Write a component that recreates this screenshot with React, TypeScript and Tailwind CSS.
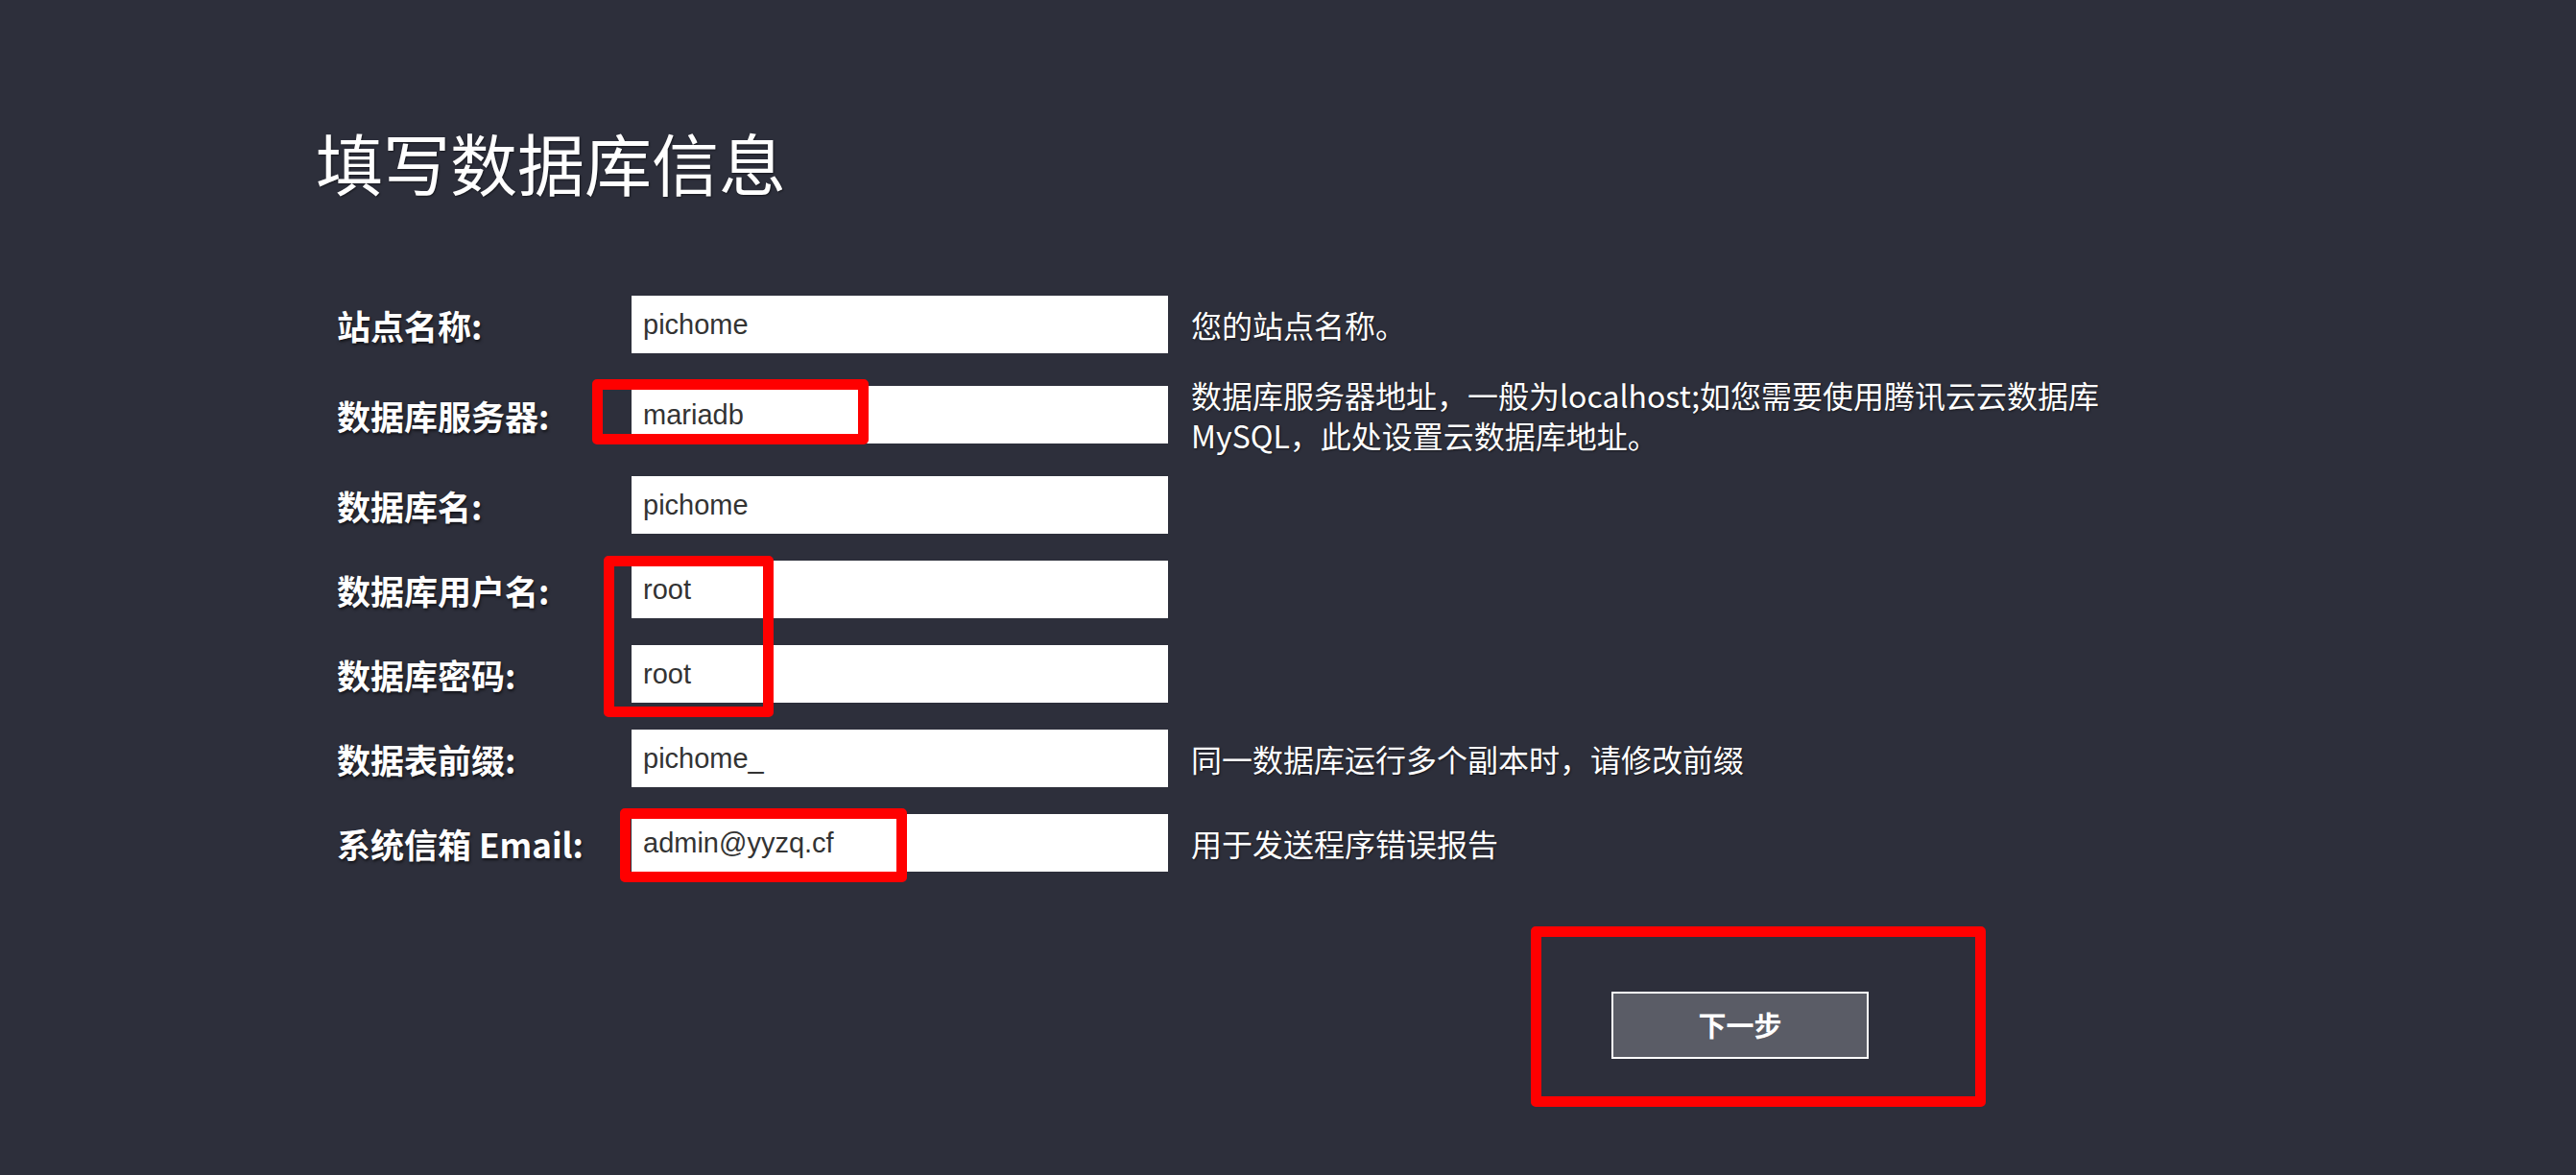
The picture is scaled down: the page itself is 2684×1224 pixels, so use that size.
import React from "react";

const cjk = "font-['Noto_Sans_CJK_SC',sans-serif]";

type Row = { label: string; value: string; help?: string[] };

const rows: Row[] = [
  { label: "站点名称:", value: "pichome", help: ["您的站点名称。"] },
  {
    label: "数据库服务器:",
    value: "mariadb",
    help: ["数据库服务器地址，一般为localhost;如您需要使用腾讯云云数据库", "MySQL，此处设置云数据库地址。"],
  },
  { label: "数据库名:", value: "pichome" },
  { label: "数据库用户名:", value: "root" },
  { label: "数据库密码:", value: "root" },
  { label: "数据表前缀:", value: "pichome_", help: ["同一数据库运行多个副本时，请修改前缀"] },
  { label: "系统信箱 Email:", value: "admin@yyzq.cf", help: ["用于发送程序错误报告"] },
];

export default function App() {
  return (
    <div className={`relative min-h-screen w-full bg-[#2d2f3b] ${cjk}`}>
      <div className="pl-[329px] pt-[134px]">
        <h1 className="text-[70px] leading-none font-normal text-white [text-shadow:1px_1px_2px_rgba(0,0,0,0.5)]">
          填写数据库信息
        </h1>
      </div>

      <div className="pl-[351px] pt-[104px] flex flex-col gap-[28px]">
        {rows.map((r, i) => (
          <div key={i} className="flex items-center">
            <div className="w-[307px] shrink-0 text-[35px] font-bold leading-none text-white [text-shadow:1px_2px_3px_rgba(0,0,0,0.6)]">
              {r.label}
            </div>
            <input
              readOnly
              value={r.value}
              className="h-[60px] w-[559px] shrink-0 bg-white pl-[12px] font-['Liberation_Sans',Arial,sans-serif] text-[29px] text-[#333333] outline-none"
            />
            {r.help && (
              <div
                className={`ml-[24px] text-[32px] text-white [text-shadow:1px_1px_2px_rgba(0,0,0,0.5)] ${
                  r.help.length > 1 ? "-my-[6px] leading-[42px]" : "leading-[36px]"
                }`}
              >
                {r.help.map((h, j) => (
                  <div key={j} className="whitespace-nowrap">{h}</div>
                ))}
              </div>
            )}
          </div>
        ))}

        <div className="mt-[97px] pl-[1328px]">
          <button className="flex h-[70px] w-[268px] items-center justify-center border-2 border-white bg-[#5a5c66] text-[29px] font-bold text-white">
            下一步
          </button>
        </div>
      </div>

      {/* annotation boxes */}
      <div className="pointer-events-none absolute left-[617px] top-[395px] h-[68px] w-[288px] rounded-[5px] border-[11px] border-[#ff0000]" />
      <div className="pointer-events-none absolute left-[629px] top-[579px] h-[168px] w-[177px] rounded-[5px] border-[11px] border-[#ff0000]" />
      <div className="pointer-events-none absolute left-[646px] top-[842px] h-[77px] w-[299px] rounded-[5px] border-[11px] border-[#ff0000]" />
      <div className="pointer-events-none absolute left-[1595px] top-[965px] h-[188px] w-[474px] rounded-[5px] border-[11px] border-[#ff0000]" />
    </div>
  );
}
